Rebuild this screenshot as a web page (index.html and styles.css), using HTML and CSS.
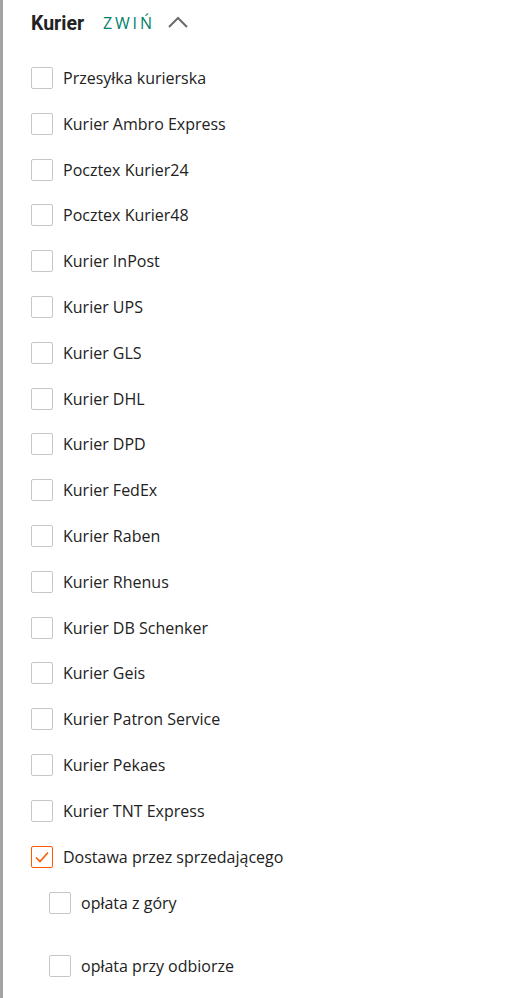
FILE: index.html
```html
<!DOCTYPE html>
<html lang="pl">
<head>
<meta charset="utf-8">
<link rel="stylesheet" href="styles.css">
</head>
<body>
<div class="panel">
  <div class="head">
    <span class="title">Kurier</span>
    <span class="toggle">ZWIŃ</span>
    <svg class="chev" width="22" height="14" viewBox="0 0 22 14"><path d="M2 12 L11 3 L20 12" fill="none" stroke="#6b6b6b" stroke-width="2"/></svg>
  </div>
  <ul class="list">
    <li class="row"><span class="box"></span><span class="lbl">Przesyłka kurierska</span></li>
    <li class="row"><span class="box"></span><span class="lbl">Kurier Ambro Express</span></li>
    <li class="row"><span class="box"></span><span class="lbl">Pocztex Kurier24</span></li>
    <li class="row"><span class="box"></span><span class="lbl">Pocztex Kurier48</span></li>
    <li class="row"><span class="box"></span><span class="lbl">Kurier InPost</span></li>
    <li class="row"><span class="box"></span><span class="lbl">Kurier UPS</span></li>
    <li class="row"><span class="box"></span><span class="lbl">Kurier GLS</span></li>
    <li class="row"><span class="box"></span><span class="lbl">Kurier DHL</span></li>
    <li class="row"><span class="box"></span><span class="lbl">Kurier DPD</span></li>
    <li class="row"><span class="box"></span><span class="lbl">Kurier FedEx</span></li>
    <li class="row"><span class="box"></span><span class="lbl">Kurier Raben</span></li>
    <li class="row"><span class="box"></span><span class="lbl">Kurier Rhenus</span></li>
    <li class="row"><span class="box"></span><span class="lbl">Kurier DB Schenker</span></li>
    <li class="row"><span class="box"></span><span class="lbl">Kurier Geis</span></li>
    <li class="row"><span class="box"></span><span class="lbl">Kurier Patron Service</span></li>
    <li class="row"><span class="box"></span><span class="lbl">Kurier Pekaes</span></li>
    <li class="row"><span class="box"></span><span class="lbl">Kurier TNT Express</span></li>
    <li class="row"><span class="box checked"><svg width="22" height="22" viewBox="0 0 22 22"><path d="M5 11.5 L9 15.5 L17 6.5" fill="none" stroke="#ff5a00" stroke-width="1.6"/></svg></span><span class="lbl">Dostawa przez sprzedającego</span></li>
  </ul>
  <ul class="sub">
    <li class="row"><span class="box"></span><span class="lbl">opłata z góry</span></li>
    <li class="row"><span class="box"></span><span class="lbl">opłata przy odbiorze</span></li>
  </ul>
</div>
</body>
</html>
```
FILE: styles.css
```css
html, body {
  margin: 0;
  padding: 0;
  background: #fff;
}
body {
  font-family: "Open Sans", "Noto Sans", sans-serif;
  color: #222;
}
.panel {
  border-left: 3px solid #a3a3a3;
  min-height: 998px;
  box-sizing: border-box;
  padding: 10px 0 0 28px;
}
.head {
  display: flex;
  align-items: center;
  height: 26px;
}
.title {
  font-family: Roboto, "Liberation Sans", sans-serif;
  font-weight: 700;
  font-size: 19.5px;
  color: #222;
}
.toggle {
  margin-left: 19px;
  font-size: 16px;
  letter-spacing: 2.8px;
  color: #00806a;
  font-weight: 500;
}
.chev {
  margin-left: 12px;
  margin-top: -2px;
}
.list, .sub {
  list-style: none;
  margin: 0;
  padding: 0;
}
.list {
  margin-top: 19px;
}
.row {
  display: flex;
  align-items: center;
  height: 45.82px;
  font-size: 16px;
}
.box {
  width: 20px;
  height: 20px;
  border: 1px solid #c6c6c6;
  border-radius: 2px;
  flex: none;
  margin-right: 10px;
  display: flex;
  align-items: center;
  justify-content: center;
  background: #fff;
}
.box svg {
  flex: none;
}
.box.checked {
  border-color: #ff5a00;
}
.sub {
  padding-left: 18px;
  display: flex;
  flex-direction: column;
  gap: 18px;
}
.sub .box {
  margin-right: 10px;
}
```
